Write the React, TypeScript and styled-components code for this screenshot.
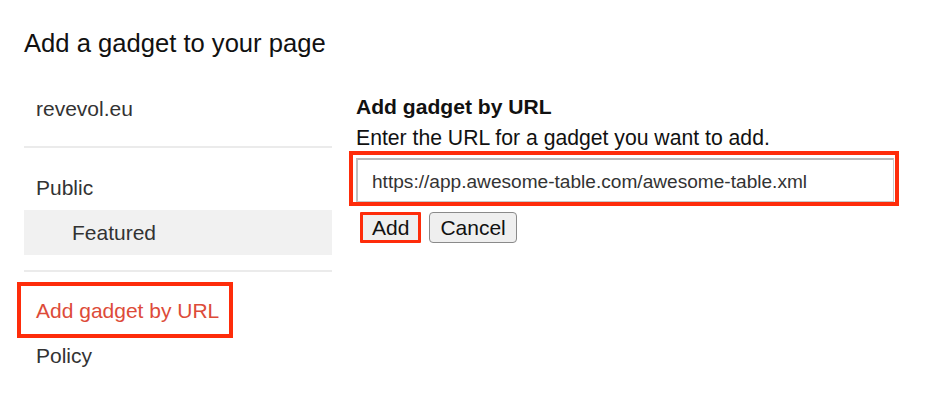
import React from "react";
import styled, { createGlobalStyle, css } from "styled-components";

const GlobalStyle = createGlobalStyle`
  html, body { margin: 0; padding: 0; background: #ffffff; }
  body {
    font-family: "Liberation Sans", Arial, Helvetica, sans-serif;
    color: #1a1a1a;
  }
`;

const ANNOT = "#fe2c0a";

const Page = styled.div`
  width: 940px;
  height: 416px;
  box-sizing: border-box;
  padding: 28px 0 0 24px;
  overflow: hidden;
  background: #fff;
`;

const Title = styled.h1`
  margin: 0;
  font-size: 25.6px;
  font-weight: 400;
  line-height: 30px;
  color: #111;
`;

const Body = styled.div`
  display: grid;
  grid-template-columns: 308px 1fr;
  column-gap: 24px;
  margin-top: 28px;
`;

const Nav = styled.nav`
  display: flex;
  flex-direction: column;
`;

const NavItem = styled.div<{ $indent?: boolean; $selected?: boolean; $active?: boolean; $highlight?: boolean }>`
  position: relative;
  height: 45px;
  line-height: 45px;
  font-size: 21px;
  white-space: nowrap;
  padding-left: ${(p) => (p.$indent ? 48 : 12)}px;
  background: ${(p) => (p.$selected ? "#f1f1f1" : "transparent")};
  color: ${(p) => (p.$active ? "#dd4b39" : "#333333")};
  ${(p) =>
    p.$highlight &&
    css`
      &::after {
        content: "";
        position: absolute;
        left: -7px;
        top: -6px;
        width: 216px;
        bottom: -5px;
        box-sizing: border-box;
        border: 4px solid ${ANNOT};
        pointer-events: none;
      }
    `}
`;

const Divider = styled.hr<{ $after?: number }>`
  border: 0;
  height: 2px;
  background: #ebebeb;
  margin: 15px 0 ${(p) => p.$after ?? 16}px;
`;

const Panel = styled.section`
  padding-top: 9px;
`;

const PanelHeading = styled.h2`
  margin: 0;
  font-size: 21.1px;
  font-weight: 700;
  line-height: 24px;
  color: #111;
`;

const Hint = styled.p`
  margin: 7px 0 0;
  font-size: 21.2px;
  line-height: 24px;
  color: #111;
`;

const UrlField = styled.div`
  position: relative;
  width: 538px;
  margin-top: 8px;
  &::after {
    content: "";
    position: absolute;
    left: -7px;
    top: -7px;
    right: -5px;
    bottom: -4px;
    border: 4px solid ${ANNOT};
    pointer-events: none;
  }
`;

const UrlInput = styled.input`
  display: block;
  box-sizing: border-box;
  width: 100%;
  height: 44px;
  margin: 0;
  padding: 2px 0 0 14px;
  border: 1px solid #c9c9c9;
  border-top: 2px solid #b9b9b9;
  border-left: 2px solid #c0c0c0;
  background: #fff;
  font-family: "Liberation Sans", Arial, Helvetica, sans-serif;
  font-size: 19.1px;
  color: #333;
  outline: none;
`;

const Actions = styled.div`
  display: flex;
  gap: 7.5px;
  margin-top: 10px;
  padding-left: 4px;
`;

const Button = styled.button<{ $highlight?: boolean }>`
  box-sizing: border-box;
  height: 30.5px;
  margin: 0;
  padding: 0 ${(p) => (p.$highlight ? 9 : 10.5)}px;
  font-family: "Liberation Sans", Arial, Helvetica, sans-serif;
  font-size: 21px;
  line-height: 1;
  color: #111;
  background: #efefef;
  border: ${(p) => (p.$highlight ? `3px solid ${ANNOT}` : "1.5px solid #8a8a8a")};
  border-radius: ${(p) => (p.$highlight ? "1px" : "4px")};
  cursor: pointer;
`;

export default function App() {
  return (
    <>
      <GlobalStyle />
      <Page>
        <Title>Add a gadget to your page</Title>
        <Body>
          <Nav>
            <NavItem>revevol.eu</NavItem>
            <Divider $after={17} />
            <NavItem>Public</NavItem>
            <NavItem $indent $selected>
              Featured
            </NavItem>
            <Divider />
            <NavItem $active $highlight>
              Add gadget by URL
            </NavItem>
            <NavItem>Policy</NavItem>
          </Nav>
          <Panel>
            <PanelHeading>Add gadget by URL</PanelHeading>
            <Hint>Enter the URL for a gadget you want to add.</Hint>
            <UrlField>
              <UrlInput
                type="text"
                defaultValue="https://app.awesome-table.com/awesome-table.xml"
              />
            </UrlField>
            <Actions>
              <Button $highlight>Add</Button>
              <Button>Cancel</Button>
            </Actions>
          </Panel>
        </Body>
      </Page>
    </>
  );
}
